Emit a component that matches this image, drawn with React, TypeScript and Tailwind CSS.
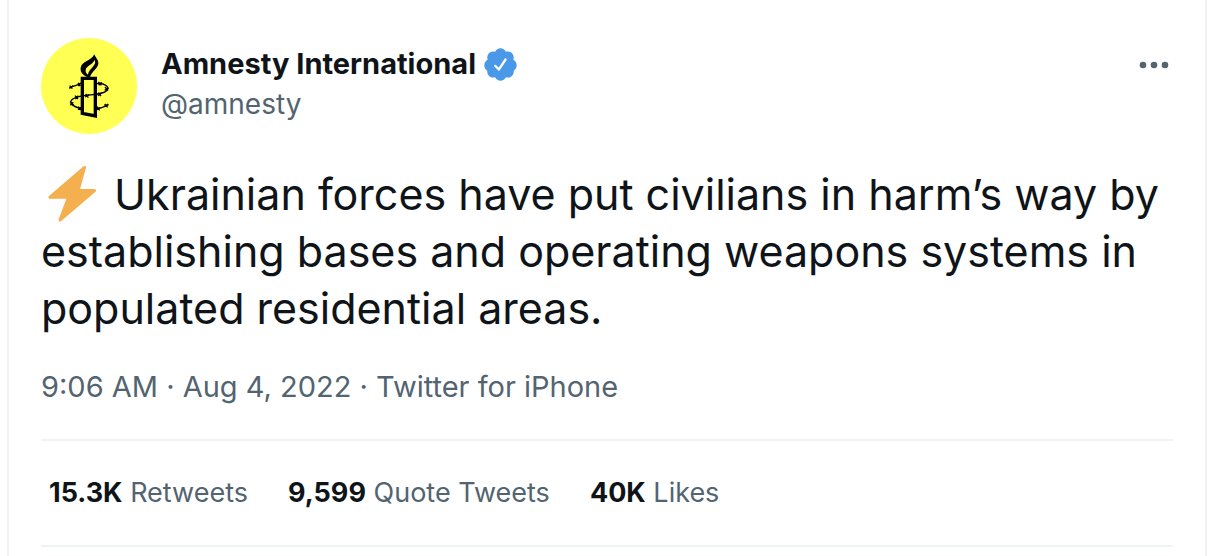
import React from 'react';

interface Stat {
    count: string;
    label: string;
}

const STATS: Stat[] = [
    { count: '15.3K', label: 'Retweets' },
    { count: '9,599', label: 'Quote Tweets' },
    { count: '40K', label: 'Likes' },
];

const Avatar: React.FC = () => (
    <svg viewBox="21 24 288 288" className="w-24 h-24 shrink-0" role="img" aria-label="Amnesty International">
        <circle cx="165" cy="168" r="144" fill="#ffff54" />
        {/* flame */}
        <path
            fillRule="evenodd"
            d="M181 73C184 83 194 89 193 101C191 117 172 124 168 142L161 141C149 136 138 129 140 113C143 94 172 93 181 73ZM182 90C176 104 156 108 155 120C154 127 157 131 162 134C164 119 180 111 183 100C184 95 183 93 182 90Z"
        />
        {/* candle */}
        <path d="M145 145H184V258L145 250Z" fill="none" stroke="#000" strokeWidth="10" />
        {/* barbed wire */}
        <g fill="none" stroke="#000" strokeWidth="4">
            <path d="M107 173L141 161" />
            <path d="M188 161C212 158 229 171 218 182C205 195 167 193 138 199C112 204 103 216 117 226C124 231 134 234 143 236" />
            <path d="M187 236C200 236 211 230 223 224" />
        </g>
        <g stroke="#000" strokeWidth="4">
            <path d="M107 167L115 176M106 175L118 167M132 159L139 168M133 168L140 158" />
            <path d="M193 156L202 166M194 166L203 157M213 171L222 182M212 181L224 174" />
            <path d="M193 188L201 198M192 197L203 188M155 192L163 203M153 201L166 194M123 197L132 207M124 207L133 197" />
            <path d="M108 215L119 225M109 226L118 217M133 230L140 240M132 239L142 232M189 230L197 241M188 239L199 232M212 222L221 232M211 230L223 222" />
        </g>
    </svg>
);

const VerifiedBadge: React.FC = () => (
    <svg viewBox="0 0 24 24" className="w-[37px] h-[37px] shrink-0" role="img" aria-label="Verified account">
        <circle cx="12" cy="12.5" r="7" fill="#fff" />
        <path
            fill="#4a99e9"
            d="M22.5 12.5c0-1.58-.875-2.95-2.148-3.6.154-.435.238-.905.238-1.4 0-2.21-1.71-3.998-3.818-3.998-.47 0-.92.084-1.336.25C14.818 2.415 13.51 1.5 12 1.5s-2.816.917-3.437 2.25c-.415-.165-.866-.25-1.336-.25-2.11 0-3.818 1.79-3.818 4 0 .494.083.964.237 1.4-1.272.65-2.147 2.018-2.147 3.6 0 1.495.782 2.798 1.942 3.486-.02.17-.032.34-.032.514 0 2.21 1.708 4 3.818 4 .47 0 .92-.086 1.335-.25.62 1.334 1.926 2.25 3.437 2.25 1.512 0 2.818-.916 3.437-2.25.415.163.865.248 1.336.248 2.11 0 3.818-1.79 3.818-4 0-.174-.012-.344-.033-.513 1.158-.687 1.943-1.99 1.943-3.484zm-6.616-3.334l-4.334 6.5c-.145.217-.382.334-.625.334-.143 0-.288-.04-.416-.126l-.115-.094-2.415-2.415c-.293-.293-.293-.768 0-1.06s.768-.294 1.06 0l1.77 1.767 3.825-5.74c.23-.345.696-.436 1.04-.207.346.23.44.696.21 1.04z"
        />
    </svg>
);

const Bolt: React.FC = () => (
    <svg viewBox="0 0 61 57" className="inline-block w-[61px] h-[57px] align-bottom" role="img" aria-label="High voltage">
        <path
            d="M43.5 1.5L9 31.2H27.5L19 54L53.5 24.6H37Z"
            fill="#f4b04f"
            stroke="#f4b04f"
            strokeWidth="3"
            strokeLinejoin="round"
        />
    </svg>
);

const App: React.FC = () => {
    return (
        <div className="bg-white pl-[7px] pr-[3px] font-['Inter','Liberation_Sans',sans-serif] text-[#0f1419]">
            <article className="border-x-2 border-[#eff3f4] px-8 pt-[38px] pb-[9px]">
                <header className="flex items-start">
                    <Avatar />
                    <div className="ml-6 pt-1.5 grow leading-10">
                        <div className="flex items-center gap-1.5">
                            <a href="#profile" className="text-[29px] leading-10 font-bold">Amnesty International</a>
                            <VerifiedBadge />
                        </div>
                        <a href="#profile" className="block text-[28px] leading-10 text-[#536471]">@amnesty</a>
                    </div>
                    <button type="button" aria-label="More" className="mt-[7px] h-10 w-[38px] flex items-center justify-center text-[#536471]">
                        <svg viewBox="0 0 30 8" className="w-[30px] h-2" fill="currentColor">
                            <circle cx="4" cy="4" r="3.3" />
                            <circle cx="15" cy="4" r="3.3" />
                            <circle cx="26" cy="4" r="3.3" />
                        </svg>
                    </button>
                </header>

                <p className="mt-8 text-[43px] leading-[57px]">
                    <Bolt /> Ukrainian forces have put civilians in harm’s way by establishing bases and operating weapons systems in populated residential areas.
                </p>

                <div className="mt-[30px] text-[29px] leading-10 text-[#536471]">
                    <a href="#status">9:06 AM · Aug 4, 2022</a> · <a href="#source">Twitter for iPhone</a>
                </div>

                <div className="mt-8 flex gap-10 border-y-2 border-[#eff3f4] px-2 py-8 text-[27px] leading-10">
                    {STATS.map(stat => (
                        <a key={stat.label} href="#stats" className="text-[#536471]">
                            <span className="font-bold text-[#0f1419]">{stat.count}</span> {stat.label}
                        </a>
                    ))}
                </div>
            </article>
        </div>
    );
};

export default App;
